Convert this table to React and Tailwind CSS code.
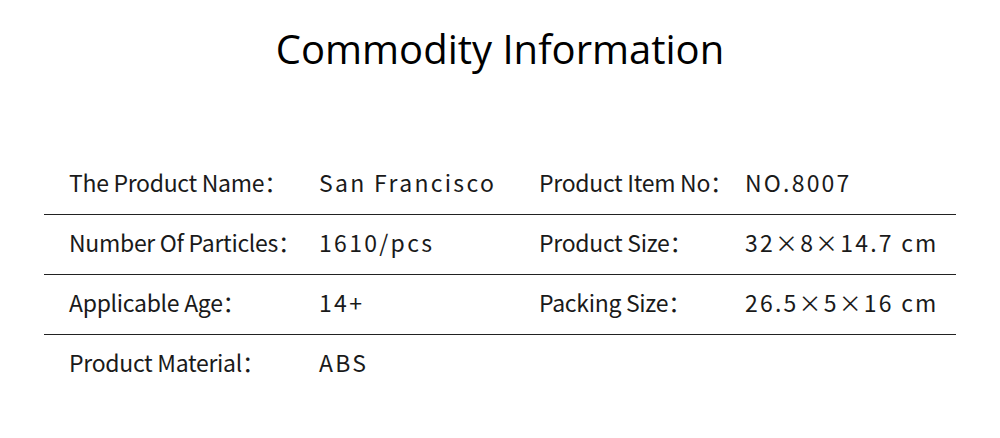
export default function App() {
  const rows = [
    ["The Product Name：", "San Francisco", "Product Item No：", "NO.8007"],
    ["Number Of Particles：", "1610/pcs", "Product Size：", "32×8×14.7 cm"],
    ["Applicable Age：", "14+", "Packing Size：", "26.5×5×16 cm"],
    ["Product Material：", "ABS", "", ""],
  ];
  return (
    <div className="w-[1000px] h-[438px] bg-white text-[#1a1a1a] overflow-hidden">
      <h1 className="text-center text-[40px] leading-none pt-[29px] font-['Open_Sans','Noto_Sans',sans-serif] text-black">
        Commodity Information
      </h1>
      <div className="mx-[44px] mt-[86px]">
        {rows.map((r, i) => (
          <div
            key={i}
            className={`flex items-center h-[60px] pl-[25px] pb-[5px] font-['Noto_Sans_CJK_SC',sans-serif] ${i < 3 ? "border-b-[1.5px] border-[#222]" : ""}`}
          >
            <div className="w-[250px] text-[23px] tracking-[-0.3px] whitespace-nowrap">{r[0]}</div>
            <div className="w-[220px] text-[23px] tracking-[2.3px] whitespace-nowrap">{r[1]}</div>
            <div className="w-[206px] text-[23px] tracking-[-0.3px] whitespace-nowrap">{r[2]}</div>
            <div className="text-[23px] tracking-[2.2px] whitespace-nowrap">{r[3]}</div>
          </div>
        ))}
      </div>
    </div>
  );
}
